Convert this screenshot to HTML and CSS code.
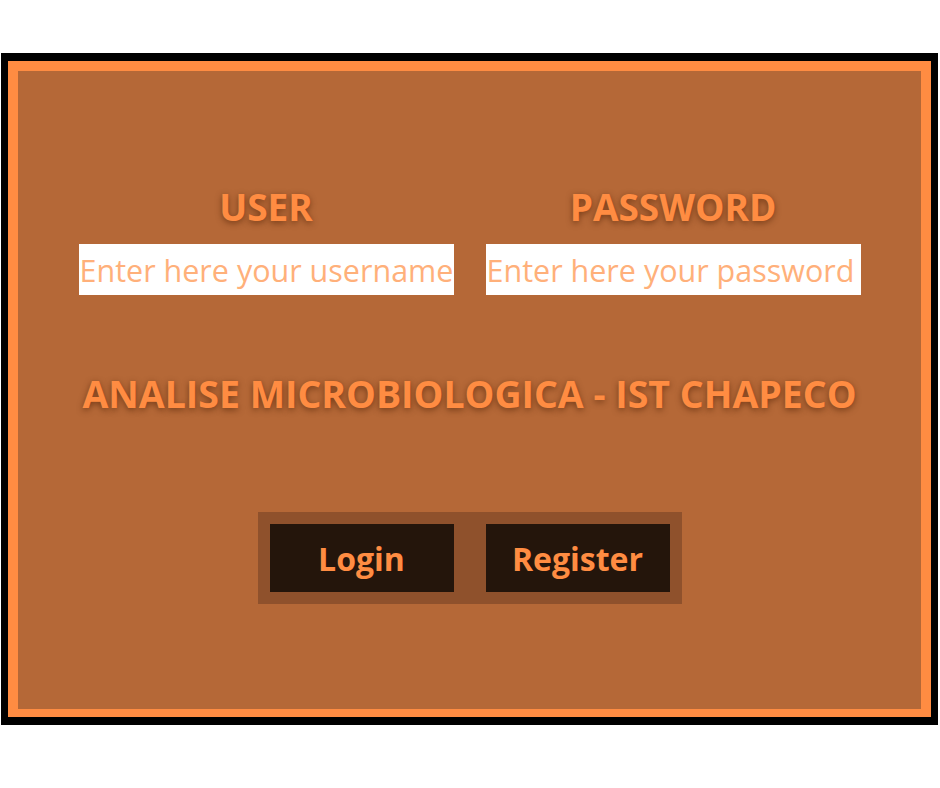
FILE: index.html
```html
<!DOCTYPE html>
<html lang="pt">
<head>
<meta charset="utf-8">
<title>Analise Microbiologica - IST Chapeco</title>
<link rel="stylesheet" href="styles.css">
</head>
<body>
<div class="page">
  <div class="frame">
    <div class="panel">
      <div class="fields">
        <div class="field">
          <label class="label" for="user">USER</label>
          <input class="input" id="user" type="text" placeholder="Enter here your username">
        </div>
        <div class="field">
          <label class="label" for="pass">PASSWORD</label>
          <input class="input" id="pass" type="password" placeholder="Enter here your password">
        </div>
      </div>
      <h1 class="title">ANALISE MICROBIOLOGICA - IST CHAPECO</h1>
      <div class="actions">
        <button class="btn" type="button">Login</button>
        <button class="btn" type="button">Register</button>
      </div>
    </div>
  </div>
</div>
</body>
</html>
```
FILE: styles.css
```css
html, body {
  margin: 0;
  padding: 0;
  background: #ffffff;
}

.page {
  width: 940px;
  height: 788px;
  padding: 53px 2px 0 1px;
  box-sizing: border-box;
  font-family: "Open Sans", "Liberation Sans", sans-serif;
}

.frame {
  border-style: solid;
  border-color: #000000;
  border-width: 8px 7px 8px 7px;
  background: #ff8c42;
}

.panel {
  margin: 10px 10px 8px 10px;
  height: 638px;
  background: #b56837;
  display: flex;
  flex-direction: column;
  align-items: center;
}

.fields {
  display: flex;
  gap: 32px;
  margin-top: 113px;
}

.field {
  display: flex;
  flex-direction: column;
  align-items: center;
}

.label {
  font-size: 37px;
  font-weight: 700;
  line-height: 46px;
  color: #ff8c42;
  text-shadow: 0 2px 6px rgba(90, 40, 10, 0.7);
  margin-bottom: 14px;
}

.input {
  width: 375px;
  height: 51px;
  box-sizing: border-box;
  border: none;
  outline: none;
  margin: 0;
  padding: 0 0 0 1px;
  background: #ffffff;
  font-family: "Open Sans", "Liberation Sans", sans-serif;
  font-size: 30.5px;
  color: #ffb07a;
}

.input::placeholder {
  color: #ffb07a;
  opacity: 1;
}

.title {
  margin: 76px 0 0 0;
  font-size: 37.5px;
  font-weight: 700;
  line-height: 46px;
  color: #ff8c42;
  text-shadow: 0 2px 6px rgba(90, 40, 10, 0.7);
}

.actions {
  margin-top: 95px;
  display: flex;
  gap: 32px;
  padding: 12px;
  background: #8f512c;
}

.btn {
  width: 184px;
  height: 68px;
  border: none;
  margin: 0;
  padding: 0;
  background: #24150b;
  color: #ff8c42;
  font-family: "Open Sans", "Liberation Sans", sans-serif;
  font-size: 32px;
  font-weight: 700;
  cursor: pointer;
}
```
